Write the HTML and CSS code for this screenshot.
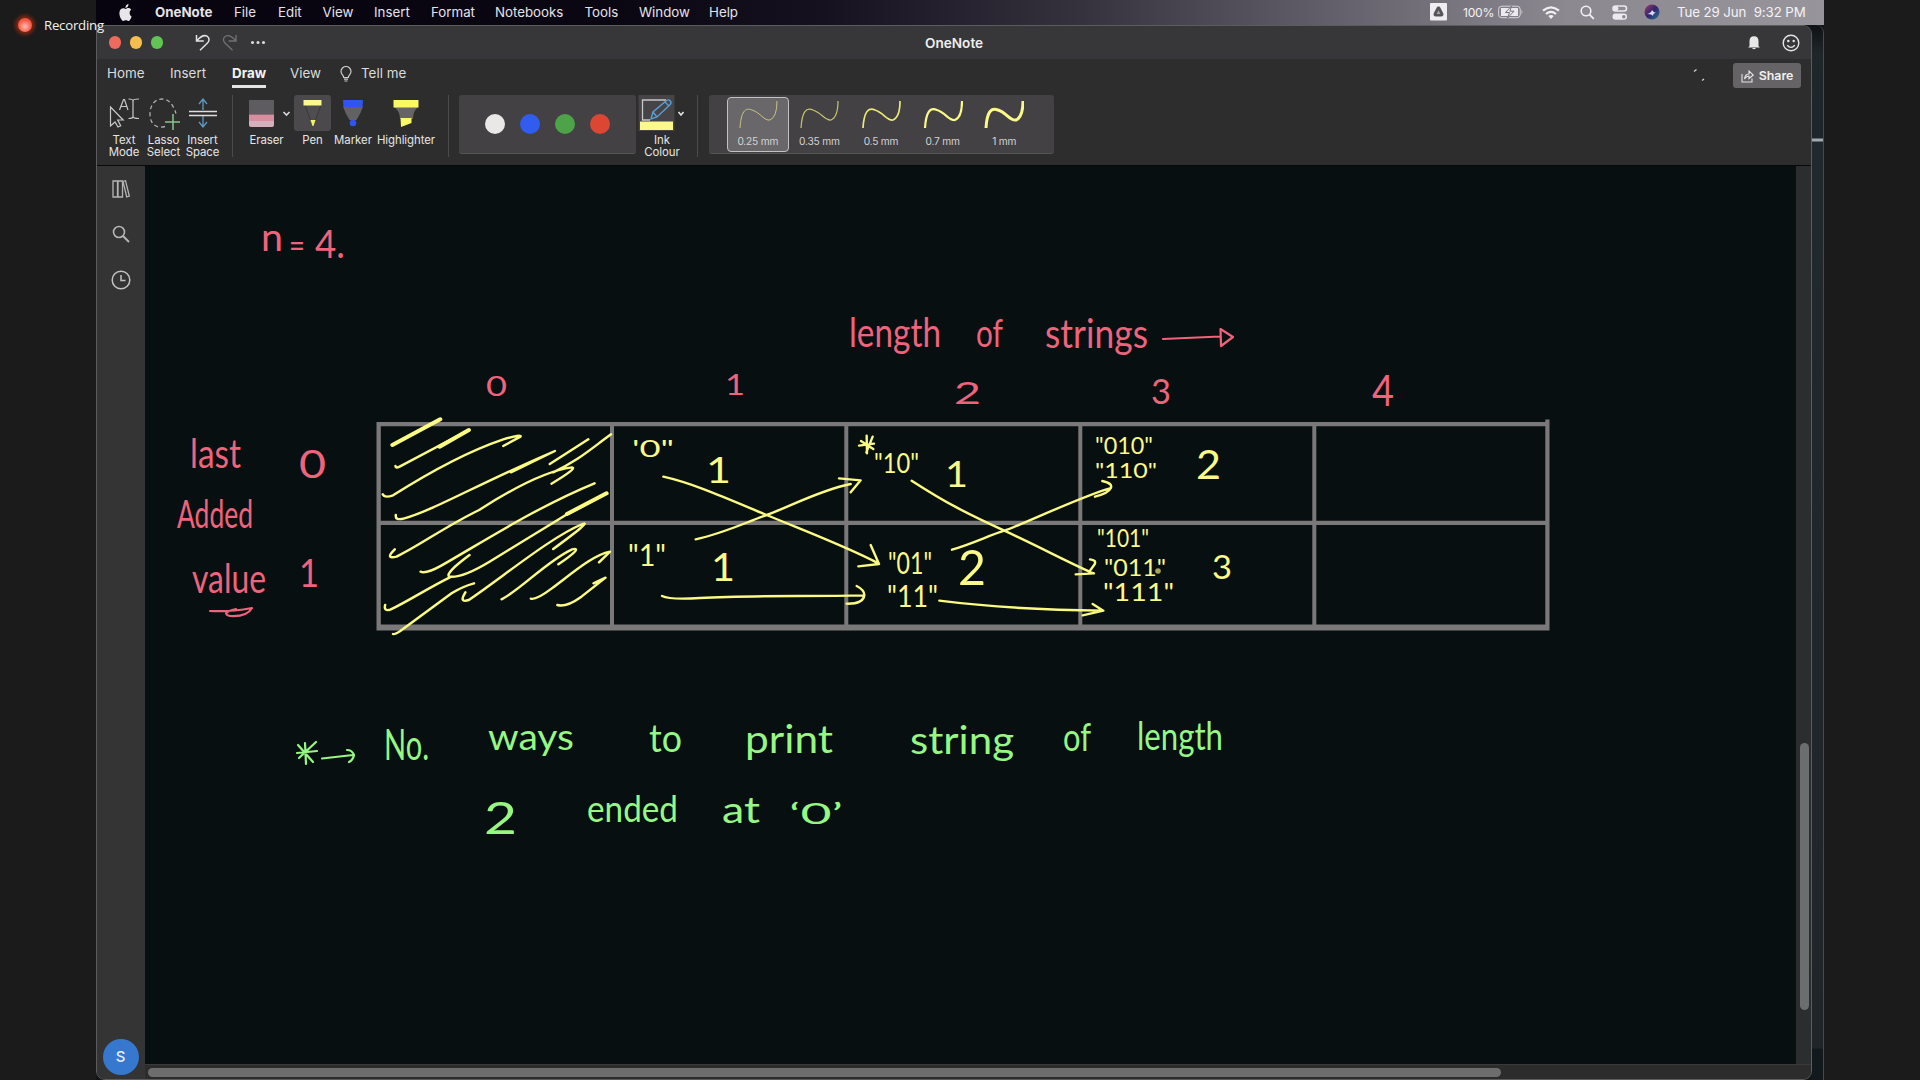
FILE: index.html
```html
<!DOCTYPE html>
<html lang="en">
<head>
<meta charset="utf-8">
<title>OneNote</title>
<link rel="stylesheet" href="styles.css">
</head>
<body>
<div class="recording"><i class="rec-dot"></i><span>Recording</span></div>
<div class="desktop">
  <header class="menubar">
    <svg class="apple" viewBox="0 0 24 24" preserveAspectRatio="none"><path fill="#e8e6ea" d="M12.152 6.896c-.948 0-2.415-1.078-3.96-1.04-2.04.027-3.91 1.183-4.961 3.014-2.117 3.675-.546 9.103 1.519 12.09 1.013 1.454 2.208 3.09 3.792 3.039 1.52-.065 2.09-.987 3.935-.987 1.831 0 2.35.987 3.96.948 1.637-.026 2.676-1.48 3.676-2.948 1.156-1.688 1.636-3.325 1.662-3.415-.039-.013-3.182-1.221-3.22-4.857-.026-3.04 2.48-4.494 2.597-4.559-1.429-2.09-3.623-2.324-4.39-2.376-2-.156-3.675 1.09-4.61 1.09zM15.53 3.83c.843-1.012 1.4-2.427 1.245-3.83-1.207.052-2.662.805-3.532 1.818-.78.896-1.454 2.338-1.273 3.714 1.338.104 2.715-.688 3.559-1.701"/></svg>
    <nav class="menus"><b>OneNote</b><span>File</span><span>Edit</span><span>View</span><span>Insert</span><span>Format</span><span>Notebooks</span><span>Tools</span><span>Window</span><span>Help</span></nav>
    <div class="status">
      <svg width="17" height="18" viewBox="0 0 17 18"><rect width="17" height="17.500" rx="1" fill="#efedf1"/><path d="M8.500 3.500c1 0 1.500.5 2 1.400l2.600 5c1 2-.1 3.600-2 3.600H5.900c-1.900 0-3-1.600-2-3.600l2.600-5c.5-.9 1-1.400 2-1.400z" fill="#56535b"/><path d="M8.500 7.300l1.900 3.600H6.600z" fill="#aaa7ad"/></svg>
      <span class="percent">100%</span>
      <svg width="26" height="14" viewBox="0 0 26 14"><rect x=".7" y="1.200" width="21.500" height="11.500" rx="3" fill="none" stroke="#d8d5da"/><path d="M3 3h17v8H3z" fill="#eceaee"/><path d="M23.500 4.500q2 2.500 0 5z" fill="#c3c0c6"/><path d="M13.500 1L7.500 7.500h4L9.500 13l6.500-6.800h-4z" fill="#eceaee" stroke="#77737c"/></svg>
      <svg width="18" height="13" viewBox="0 0 18 13"><g fill="none" stroke="#f1eff3" stroke-width="2.200"><path d="M1 4.600Q9-2 17 4.600M4 8Q9 3.800 14 8"/></g><path d="M9 13L6.300 10Q9 8 11.700 10z" fill="#f1eff3"/></svg>
      <svg width="15" height="15" viewBox="0 0 15 15"><circle cx="6" cy="6" r="4.800" fill="none" stroke="#f1eff3" stroke-width="1.600"/><path d="M9.600 9.600l4.200 4.200" stroke="#f1eff3" stroke-width="1.800"/></svg>
      <svg width="16" height="15" viewBox="0 0 16 15"><rect x="1" y="1" width="13.500" height="5" rx="2.500" fill="none" stroke="#eceaee" stroke-width="1.500"/><circle cx="4" cy="3.500" r="2.400" fill="#eceaee"/><rect x=".5" y="8.500" width="14.500" height="6.300" rx="3" fill="#eceaee"/><circle cx="11.800" cy="11.700" r="1.700" fill="#8a868e"/></svg>
      <svg width="16" height="16" viewBox="0 0 16 16"><defs><linearGradient id="siri" x2="1" y2="1"><stop offset="0" stop-color="#a33a6c"/><stop offset=".5" stop-color="#31236c"/><stop offset="1" stop-color="#287b91"/></linearGradient></defs><circle cx="8" cy="8" r="7.500" fill="url(#siri)"/><path d="M3 10Q7 9 8 6q2 3 4 3-3 0-3 3-1-2-6-2" fill="#d8dcff"/></svg>
      <span class="clock">Tue 29 Jun&nbsp; 9:32 PM</span>
    </div>
  </header>
  <main class="window">
    <div class="titlebar">
      <div class="lights"><i class="close"></i><i class="mini"></i><i class="full"></i></div>
      <svg class="quick" width="74" height="20" viewBox="0 0 74 20" fill="none"><path d="M1.500 2v6h7.300M2 7.500C6 3 9 1.600 12 3.200c3 2 2.500 5 0 7.300L5 17.300" stroke="#e2e2e2" stroke-width="1.500"/><path d="M41 2v6h-7.300M40.500 7.500C36.500 3 33.500 1.600 30.500 3.200c-3 2-2.500 5 0 7.300l7 6.800" stroke="#727274" stroke-width="1.300"/><g fill="#ddd"><circle cx="57.500" cy="9.500" r="1.500"/><circle cx="63" cy="9.500" r="1.500"/><circle cx="68.500" cy="9.500" r="1.500"/></g></svg>
      <b class="title">OneNote</b>
      <div class="title-actions">
        <svg width="14" height="15" viewBox="0 0 14 15"><path d="M2.500 11V6C2.500 3 4 1.300 7 1.300S11.500 3 11.500 6v5l1.300 1.500H1.200zM5 13h4q-2 2.500-4 0z" fill="#e7e7e7"/></svg>
        <svg width="18" height="18" viewBox="0 0 18 18"><g fill="none" stroke="#e4e4e4" stroke-width="1.400"><circle cx="9" cy="9" r="7.800"/><path d="M5.200 11.200Q9 15.600 12.800 11.200"/></g><circle cx="6.300" cy="7" r="1.200" fill="#eee"/><circle cx="11.700" cy="7" r="1.200" fill="#eee"/></svg>
      </div>
    </div>
    <div class="tabs">
      <div class="tab-list"><span>Home</span><span>Insert</span><b>Draw</b><span>View</span>
        <svg width="12" height="16" viewBox="0 0 12 16" fill="none" stroke="#ccc" stroke-width="1.200"><path d="M3.700 11.500C3.700 9 1 8.500 1 5.500a5 5 0 0 1 10 0c0 3-2.700 3.500-2.700 6zM4 13.200h4M4.500 15h3"/></svg>
        <span>Tell me</span></div>
      <svg class="spinner" width="14" height="14" viewBox="0 0 14 14"><path d="M1 3.500l2.500-2M9 12.500l2-1.500" stroke="#d0d0d0" stroke-width="1.300"/></svg>
      <div class="share"><svg width="13" height="14" viewBox="0 0 13 14" fill="none" stroke="#e4e4e4" stroke-width="1.100"><path d="M1 5v8h10V9.500M3.500 10C4 6.500 6 5 8 5V2l4.300 4L8 9.500V7Q5.500 7 3.500 10z"/></svg><b>Share</b></div>
    </div>
    <div class="ribbon">
      <div class="tool"><svg width="32" height="36" viewBox="0 0 32 36" fill="none" stroke="#c9c9c9" stroke-width="1.200"><path d="M2.500 12v19l4.500-4 3 5 2.700-1.300-3-5.700h5.500zM11.500 15l4-10.500h1L20 15M13 11.500h6M20.500 4q4.500 0 4.500 2 0-2 6-2M25 5v17M20.500 23.500q4.500 0 4.500-2 0 2 6 2"/></svg><span>Text<br>Mode</span></div>
      <div class="tool"><svg width="34" height="36" viewBox="0 0 34 36" fill="none"><path d="M18 31.500C8 34 3 28 3 19 3 10 8 4 15 4c7 0 10 5 13 11.500l1 3" stroke="#adadad" stroke-width="1.300" stroke-dasharray="4 3"/><path d="M26 19v16M18 27h15" stroke="#88c58c" stroke-width="1.500"/></svg><span>Lasso<br>Select</span></div>
      <div class="tool"><svg width="30" height="36" viewBox="0 0 30 36" fill="none"><path d="M15 15V4.500M11 9l4-5 4 5M15 21v11M11 27l4 5 4-5" stroke="#5b9bc6" stroke-width="1.300"/><path d="M1 16.500h28M1 20.500h28" stroke="#dedede" stroke-width="1.400"/></svg><span>Insert<br>Space</span></div>
      <i class="rule"></i>
      <div class="tool"><svg width="49" height="36" viewBox="0 0 49 36"><path d="M7 5h25v14.500H7z" fill="#5f5c61"/><path d="M7 19.500h25V26H7z" fill="#d78fa0"/><path d="M7 26h25v4q0 2-2 2H9q-2 0-2-2z" fill="#d3b0bb"/><path d="M41.500 17l3 3 3-3" fill="none" stroke="#d6d6d6" stroke-width="1.700"/></svg><span>Eraser</span></div>
      <div class="tool picked"><svg width="37" height="36" viewBox="0 0 37 36"><path d="M11 10l5.500 15h5L27 10" fill="#4f4e4f"/><path d="M11 10l5.500 15M27 10l-5.500 15" stroke="#3a393a"/><path d="M9.500 5h18v5.500h-18z" fill="#fbf98e"/><path d="M16.500 25h5L19.500 31h-1z" fill="#f5f569"/></svg><span>Pen</span></div>
      <div class="tool"><svg width="22" height="36" viewBox="0 0 22 36"><path d="M1 11.500h20Q19 18 14.500 25h-7Q3 18 1 11.500z" fill="#626164"/><path d="M1 5h20l-.5 7h-19z" fill="#2f55ee"/><circle cx="11" cy="28" r="3.300" fill="#2f55ee"/></svg><span>Marker</span></div>
      <div class="tool"><svg width="26" height="36" viewBox="0 0 26 36"><path d="M1 12h24q-5 4-5 12H7Q7 16 1 12z" fill="#666466"/><path d="M.5 5h25v7.500H.5zM7.500 23h11v5L8 32z" fill="#faf964"/></svg><span>Highlighter</span></div>
      <i class="rule"></i>
      <div class="swatches"><i class="white"></i><i class="blue"></i><i class="green"></i><i class="red"></i></div>
      <div class="tool"><svg width="48" height="36" viewBox="0 0 48 36" fill="none"><path d="M.5 0h36v36H.5z" fill="#464447"/><path d="M28 5H4.500v20H12" stroke="#c8c8c8" stroke-width="1.300"/><path d="M13 24l2-7L28.500 5.500q2-1.500 3.800.5 1.500 2-.3 3.800L19 22zM15 17l4 5M27 7l4 4" stroke="#5a9fd4" stroke-width="1.400"/><path d="M2 26.500h33v8.500H2z" fill="#fbf98c"/><path d="M40.500 17l2.500 3 2.500-3" stroke="#e0e0e0" stroke-width="1.700"/></svg><span>Ink<br>Colour</span></div>
      <i class="rule"></i>
      <div class="widths">
        <div class="width chosen"><svg width="40" height="30" viewBox="0 0 40 30"><path class="curve c1" d="M2 28C3 12 7 7 14 10c9 3 12 11 18 10q7-3 7-19"/></svg><span>0.25 mm</span></div>
        <div class="width"><svg width="40" height="30" viewBox="0 0 40 30"><path class="curve c2" d="M2 28C3 12 7 7 14 10c9 3 12 11 18 10q7-3 7-19"/></svg><span>0.35 mm</span></div>
        <div class="width"><svg width="40" height="30" viewBox="0 0 40 30"><path class="curve c3" d="M2 28C3 12 7 7 14 10c9 3 12 11 18 10q7-3 7-19"/></svg><span>0.5 mm</span></div>
        <div class="width"><svg width="40" height="30" viewBox="0 0 40 30"><path class="curve c4" d="M2 28C3 12 7 7 14 10c9 3 12 11 18 10q7-3 7-19"/></svg><span>0.7 mm</span></div>
        <div class="width"><svg width="40" height="30" viewBox="0 0 40 30"><path class="curve c5" d="M2 28C3 12 7 7 14 10c9 3 12 11 18 10q7-3 7-19"/></svg><span>1 mm</span></div>
      </div>
    </div>
    <div class="workspace">
      <aside class="sidebar">
        <svg width="18" height="18" viewBox="0 0 18 18" fill="none" stroke="#b5b5b5" stroke-width="1.300"><path d="M1 1h4.500v16H1zM6 1h4.500v16H6zM11 1.500l2.500-.8 3.800 15.300-2.600 1z"/></svg>
        <svg width="18" height="18" viewBox="0 0 18 18" fill="none" stroke="#b5b5b5"><circle cx="7" cy="7" r="5.500" stroke-width="1.600"/><path d="M11 11l6 6" stroke-width="2"/></svg>
        <svg width="20" height="20" viewBox="0 0 20 20" fill="none" stroke="#c2c2c2" stroke-width="1.500"><circle cx="10" cy="10" r="8.800"/><path d="M10 5v5.500h4.500"/></svg>
        <div class="avatar">S</div>
      </aside>
      <svg class="page" width="1651" height="898" viewBox="145 166 1651 898">
        <path d="M377 422h1172v4.300H377zM377 520.800h1172v4.300H377zM377 624.500h1172v6H377zM376.500 422h4.300v208.500h-4.300zM610 422h4v208h-4zM844.300 422h4v208h-4zM1078.300 422h4v208h-4zM1312.300 422h4v208h-4zM1545.300 419.500h4.200v211h-4.200z" fill="#7a7878"/>
        <g class="hatch" transform="translate(90 160) scale(.34439 .33333)">
          <path class="bold" d="M878 855L1017 778M1015 860L1100 810M1385 1062L1500 1000"/>
          <path d="M887 918q0 8 12 2L1100 810M850 1003q5 12 30 3C950 960 1080 880 1200 838Q1255 822 1250 830L1200 858M888 1065q-3 18 25 10C1000 1050 1130 970 1350 873L1222 937M1335 912L1447 838M885 1168q-30 30 5 22C960 1155 1030 1100 1130 1050C1250 970 1340 930 1400 922Q1415 925 1340 971M1513 823C1450 870 1420 900 1345 937M960 1235q15 8 60-18C1150 1140 1300 1040 1465 970M1102 1185Q1030 1240 1043 1250Q1080 1255 1160 1205L1390 1060L1500 1000M857 1335q-5 20 15 14C930 1320 980 1285 1045 1252M880 1422q5 2 20-8L1050 1300Q1080 1280 1115 1270M1090 1297Q1070 1330 1100 1320C1200 1250 1340 1130 1430 1092Q1460 1080 1345 1167M1195 1318C1250 1290 1330 1200 1400 1168Q1435 1160 1360 1213M1280 1316q15 5 60-30C1400 1240 1460 1185 1510 1175L1478 1207M1357 1335q25 8 70-25L1497 1253L1462 1270"/>
        </g>
        <g class="hatch" transform="translate(600 290) scale(.33333)">
          <path d="M190 560C280 580 380 625 500 675S740 770 835 820M812 765L837 822L775 829M287 748C370 730 430 700 500 675S660 600 752 582M717 565L782 571L752 607M186 918Q210 930 300 924C450 915 620 920 790 916M770 888Q793 900 793 915Q790 942 740 941M935 572C1040 640 1100 670 1213 722S1400 815 1480 850M1470 808Q1490 810 1484 823L1468 845M1482 850L1427 853M1056 779C1120 760 1170 735 1213 722S1440 620 1530 595M1507 573Q1540 580 1532 595Q1525 610 1485 620M1018 932C1160 950 1320 960 1510 962M1478 942L1510 962L1448 976"/>
          <path d="M783 453L820 477M777 467L822 461M800 437L801 490M818 440L799 487"/>
        </g>
        <g class="ink pink">
          <text x="261" y="251" font-size="39" textLength="22">n</text><text x="289" y="257" font-size="32" textLength="16">=</text><text x="315" y="258" font-size="39" textLength="30">4.</text>
          <text x="849" y="347" font-size="41" textLength="92">length</text><text x="976" y="347" font-size="38" textLength="27">of</text><text x="1045" y="348" font-size="41" textLength="103">strings</text>
          <text x="486" y="396" font-size="26" textLength="21">0</text><text x="725" y="395" font-size="28" textLength="20">1</text><text x="954" y="404" font-size="31" textLength="27">2</text><text x="1151" y="404" font-size="35" textLength="20">3</text><text x="1372" y="406" font-size="42" textLength="22">4</text>
          <text x="190" y="468" font-size="40" textLength="51">last</text><text x="177" y="528" font-size="38" textLength="76">Added</text><text x="192" y="593" font-size="40" textLength="74">value</text>
          <text x="299" y="478" font-size="38" textLength="27">0</text><text x="299" y="587" font-size="38" textLength="20">1</text>
          <path d="M1163 339L1220 336.500M1220.500 329L1233 337L1221 346zM210 611Q230 612 252 608Q247 617 230 616Q220 613 236 609"/>
        </g>
        <g class="ink yellow">
          <text x="632" y="457" font-size="23" textLength="42">'0"</text><text x="706" y="483" font-size="37" textLength="25">1</text>
          <text x="628" y="566" font-size="30" textLength="38">"1"</text><text x="711" y="581" font-size="38" textLength="24">1</text>
          <text x="874" y="473" font-size="27" textLength="45">"10"</text><text x="945" y="487" font-size="36" textLength="23">1</text>
          <text x="888" y="574" font-size="31" textLength="44">"01"</text><text x="958" y="585" font-size="49" textLength="28">2</text><text x="887" y="607" font-size="30" textLength="51">"11"</text>
          <text x="1095" y="454" font-size="24" textLength="58">"010"</text><text x="1095" y="478" font-size="22" textLength="62">"110"</text><text x="1196" y="479" font-size="41" textLength="25">2</text>
          <text x="1097" y="547" font-size="25" textLength="52">"101"</text><text x="1104" y="576" font-size="23" textLength="62">"011"</text><text x="1103" y="601" font-size="25" textLength="71">"111"</text><text x="1212" y="579" font-size="33" textLength="20">3</text>
          <circle cx="1158" cy="571" r="2.800" fill="#aaa55b"/>
        </g>
        <g class="ink green">
          <path d="M297 753L317 751M305 743L306 764M298 745L313 762M316 742L299 758M322 758.500L353 755M347 750Q352 750 354 755Q353 760 349 762"/>
          <text x="384" y="760" font-size="43" textLength="45">No.</text><text x="488" y="750" font-size="36" textLength="86">ways</text><text x="649" y="752" font-size="39" textLength="33">to</text><text x="745" y="753" font-size="38" textLength="88">print</text><text x="910" y="754" font-size="39" textLength="104">string</text><text x="1063" y="751" font-size="39" textLength="28">of</text><text x="1137" y="750" font-size="38" textLength="86">length</text>
          <text x="484" y="834" font-size="45" textLength="33">2</text><text x="587" y="822" font-size="37" textLength="91">ended</text><text x="722" y="823" font-size="37" textLength="38">at</text><text x="789" y="824" font-size="29" textLength="54">‘0’</text>
        </g>
      </svg>
      <div class="vscroll"><i></i></div>
      <div class="hscroll"><i></i></div>
    </div>
  </main>
  <aside class="behind"></aside>
</div>
<script>
document.querySelectorAll('text[textLength]').forEach(function (t) { t.setAttribute('lengthAdjust', 'spacingAndGlyphs'); });
</script>
</body>
</html>
```
FILE: styles.css
```css
* { box-sizing: border-box; }
body { margin: 0; width: 1920px; height: 1080px; overflow: hidden; background: #1b1b1b; color: #e3e3e3; font-family: Inter, "Liberation Sans", sans-serif; }
svg { display: block; flex: none; }
i { display: block; font-style: normal; }

.recording { position: absolute; z-index: 2; left: 16px; top: 15px; display: flex; align-items: center; gap: 10px; height: 20px; font: 13.2px "Open Sans", sans-serif; letter-spacing: -.22px; color: #f2f2f2; }
.rec-dot { width: 18px; height: 18px; border: 2px solid #6d2413; border-radius: 50%; background: radial-gradient(circle at 50% 60%, #ffc0b5 0, #fa5d4a 55%, #e54431 100%); box-shadow: 0 0 4px #a93212; }

.desktop { width: 1728px; height: 1080px; margin-left: 96px; display: grid; grid-template: 25px 1055px / 1716px 12px; background: #121619; }
.menubar { grid-column: 1 / 3; display: flex; align-items: center; padding: 0 19px 1px 22px; background: linear-gradient(90deg, #07030f 0, #0a0612 30%, #15111e 42%, #35323e 57%, #68646f 73%, #8c8890 85%, #98949b 100%); font-size: 14px; color: #e5e3e8; }
.apple { width: 15px; height: 17px; }
.menus { display: grid; grid-template-columns: 79px 44px 44.5px 51.5px 57px 64px 89.5px 54.5px 70px 50px; margin-left: 22px; flex: 1; font-size: 13.3px; white-space: nowrap; }
.status { display: flex; align-items: center; color: #f4f2f6; white-space: nowrap; }
.status > svg:nth-of-type(2) { margin-left: 5px; }
.status > svg:nth-of-type(3) { margin-left: 18px; }
.status > svg:nth-of-type(4) { margin-left: 20px; }
.status > svg:nth-of-type(5) { margin-left: 17px; }
.status > svg:nth-of-type(6) { margin-left: 16px; }
.percent { margin-left: 16px; width: 30px; font-size: 12.2px; letter-spacing: -.3px; }
.clock { margin-left: 17px; width: 128px; font-size: 13.3px; letter-spacing: -.1px; }

.window { display: flex; flex-direction: column; height: 1055px; border: 1px solid #5c5c5e; border-radius: 0 9px 9px 9px; overflow: hidden; background: #2d2d2d; }
.titlebar { flex: 0 0 33px; display: grid; grid-template-columns: 98px 700px 170px 1fr 64px; align-items: center; background: #373739; }
.lights { display: flex; gap: 8.500px; padding-left: 12px; }
.lights i { width: 12.300px; height: 12.300px; border-radius: 50%; }
.close { background: #ed6a5e; }
.mini { background: #f4be4f; }
.full { background: #61c454; }
.title { font-size: 13.6px; font-weight: 600; text-align: left; padding-left: 30px; color: #eee; }
.title-actions { grid-column: 5; display: flex; align-items: center; gap: 21px; }
.tabs { flex: 0 0 36px; display: flex; align-items: flex-start; padding: 3px 10px 0 10px; }
.tab-list { display: grid; grid-template-columns: 63px 62px 58px 50px 21px 50px; flex: 1; font-size: 13.4px; line-height: 22px; white-space: nowrap; color: #dcdcdc; }
.tab-list b { justify-self: start; height: 26px; font-weight: 700; border-bottom: 3px solid #e4e4e4; color: #f2f2f2; }
.tab-list svg { margin-top: 4px; }
.spinner { margin: 6px 26px 0 0; }
.share { width: 68px; height: 25px; margin-top: 1px; display: flex; align-items: center; justify-content: center; gap: 5px; border-radius: 3px; background: #656366; font-size: 12.4px; color: #f0f0f0; }
.share b { font-weight: 600; }

.ribbon { flex: 0 0 71px; display: grid; grid-template-columns: 40px 39px 39px 20px 49px 43px 38px 68px 17px 181px 48px 23px 345px; padding-left: 7px; border-bottom: 1px solid #080808; }
.tool { display: flex; flex-direction: column; align-items: center; font-size: 11.400px; line-height: 12.400px; letter-spacing: -.05px; text-align: center; color: #e6e6e6; white-space: nowrap; }
.tool svg { height: 36px; margin-bottom: 3px; }
.picked svg { background: #4b494c; border-radius: 3px; }
.rule { width: 1px; height: 62px; justify-self: center; background: #4b4b4b; }
.swatches { width: 177px; height: 59px; margin-left: 2px; padding-left: 26px; display: flex; align-items: center; gap: 14.600px; background: #434144; border-radius: 3px; border-bottom: 1px solid #555; }
.swatches i { width: 20.300px; height: 20.300px; border-radius: 50%; }
.white { background: #eae8e7; }
.blue { background: #315cf0; }
.green-dot, .swatches .green { background: #4da448; }
.red { background: #dc4733; }
.widths { height: 59px; display: flex; padding: 2px 0 0 18px; background: #434144; border-radius: 3px; border-bottom: 1px solid #555; }
.width { width: 61.600px; height: 55px; padding-top: 3px; display: flex; flex-direction: column; align-items: center; gap: 5px; font-size: 10.2px; letter-spacing: -.2px; color: #d3d3d3; white-space: nowrap; }
.chosen { border: 1.500px solid #c2c1c3; border-radius: 4px; background: #69676a; padding-top: 2px; }
.curve { fill: none; stroke: #fbf987; }
.c1 { stroke-width: 1; stroke: #c9c383; }
.c2 { stroke-width: 1.200; stroke: #c9c56f; }
.c3 { stroke-width: 1.700; stroke: #eee976; }
.c4 { stroke-width: 2.200; }
.c5 { stroke-width: 3; }

.workspace { display: grid; grid-template: 898px 15px / 48px 1651px 15px; }
.sidebar { grid-row: 1 / 3; display: flex; flex-direction: column; align-items: center; gap: 27px; padding: 14px 1px 0 0; background: #343435; }
.avatar { width: 36px; height: 36px; margin-top: auto; margin-bottom: 4px; border-radius: 50%; background: #3677d0; color: #e6efff; font-size: 15px; font-weight: 500; line-height: 36px; text-align: center; }
.page { background: #070f10; }
.vscroll { background: #2c2d2e; padding: 577px 0 0 4px; }
.vscroll i { width: 8.500px; height: 267px; border-radius: 5px; background: #6c6d6e; }
.hscroll { grid-column: 2 / 4; background: #2c2c2c; padding: 3px 0 0 3px; border-top: 1px solid #3a3a3c; }
.hscroll i { width: 1353px; height: 8.500px; border-radius: 5px; background: #6d6d6d; }
.behind { background: linear-gradient(#0f1214 0, #20272b 30px, #1d262b 113px, #a1aaad 114px, #a1aaad 116px, #20292e 117px, #20252a 1023px, #121a1e 1024px); border-right: 1px solid #454a4e; border-top-right-radius: 8px; }

.ink { font-family: Lato, "Open Sans", sans-serif; }
.ink path { fill: none; stroke-width: 2.200; stroke-linecap: round; stroke-linejoin: round; }
.pink { fill: #ef637c; }
.pink path { stroke: #ef637c; }
.yellow { fill: #fbfa88; }
.ink.green { fill: #96f783; }
.ink.green path { stroke: #96f783; }
.hatch path { fill: none; stroke: #fbfa82; stroke-width: 7.200; stroke-linecap: round; stroke-linejoin: round; }
.hatch .bold { stroke-width: 12; }
```
